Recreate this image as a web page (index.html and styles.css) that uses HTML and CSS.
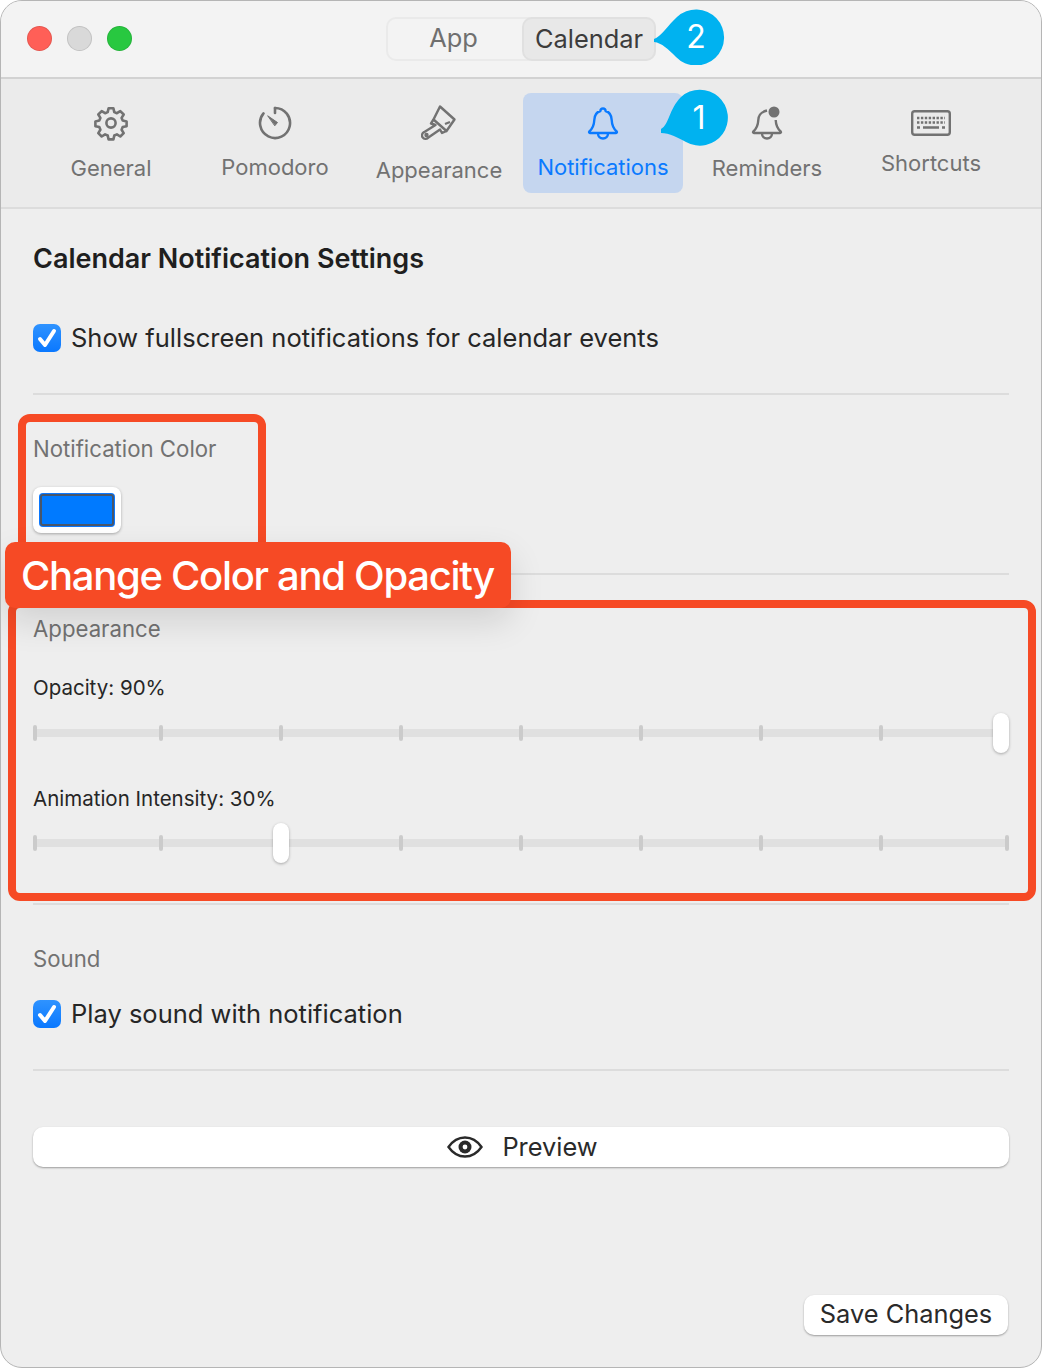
FILE: index.html
```html
<!DOCTYPE html>
<html lang="en">
<head>
    <meta charset="UTF-8">
    <title>Calendar Notification Settings</title>
    <link rel="stylesheet" href="styles.css">
</head>
<body>
    <div class="window">
        <header class="titlebar">
            <div class="lights">
                <span class="light red"></span>
                <span class="light grey"></span>
                <span class="light green"></span>
            </div>
            <div class="segments">
                <span class="segment">App</span>
                <span class="segment active">Calendar</span>
            </div>
        </header>

        <nav class="toolbar">
            <div class="tab">
                <svg class="icon icon-gear" viewBox="0 0 36 36" fill="none" stroke="currentColor" stroke-width="2.6" stroke-linejoin="round">
                    <path d="M15.6 3.2h4.8l.9 3.9 2.6 1.1 3.4-2.1 3.4 3.4-2.1 3.4 1.1 2.6 3.9.9v4.8l-3.9.9-1.1 2.6 2.1 3.4-3.4 3.4-3.4-2.1-2.6 1.1-.9 3.9h-4.8l-.9-3.9-2.6-1.1-3.4 2.1-3.4-3.4 2.1-3.4-1.1-2.6-3.9-.9v-4.8l3.9-.9 1.1-2.6-2.1-3.4 3.4-3.4 3.4 2.1 2.6-1.1z"/>
                    <circle cx="18" cy="18" r="4.6"/>
                </svg>
                <span class="tab-label">General</span>
            </div>
            <div class="tab">
                <svg class="icon icon-clock" viewBox="0 0 34 34" fill="none" stroke="currentColor" stroke-width="2.6" stroke-linecap="round">
                    <path d="M17 2a15 15 0 1 1-11.500 5.400"/>
                    <path d="M17 2v5"/>
                    <path d="M10 10l9.500 6.500-2.500 3z" fill="currentColor" stroke-width="1" stroke-linejoin="round"/>
                </svg>
                <span class="tab-label">Pomodoro</span>
            </div>
            <div class="tab">
                <svg class="icon icon-brush" viewBox="0 0 36 38" fill="none" stroke="currentColor" stroke-width="2.4" stroke-linejoin="round">
                    <path d="M19 2.500l14.500 13-8 11.500-13-11.500z"/>
                    <path d="M12.500 15.500l-2.500 4 4.500 1.500-11.500 7.200a3.500 3.500 0 1 0 4 5.600l12-8.300 2 3.500 4.500-2"/>
                    <path d="M24 20l5-2"/>
                    <circle cx="5.500" cy="31" r="1" fill="currentColor"/>
                </svg>
                <span class="tab-label">Appearance</span>
            </div>
            <div class="tab selected">
                <svg class="icon icon-bell" viewBox="0 0 32 34" fill="none" stroke="currentColor" stroke-width="2.4" stroke-linejoin="round">
                    <path d="M16 2.500c-1.500 0-2.500 1-2.600 2.500C9 6.300 7.500 9.500 7.300 14c-.2 5-1.600 8.500-5 11.500-.5.500-.2 1.500.6 1.500h26.200c.8 0 1.100-1 .6-1.500-3.400-3-4.800-6.500-5-11.500-.2-4.500-1.700-7.700-6.100-9-.1-1.500-1.100-2.500-2.600-2.500z"/>
                    <path d="M11 27.500c0 3 2.200 5 5 5s5-2 5-5"/>
                </svg>
                <span class="tab-label">Notifications</span>
            </div>
            <div class="tab">
                <svg class="icon icon-bell" viewBox="0 0 32 34" fill="none" stroke="currentColor" stroke-width="2.4" stroke-linejoin="round">
                    <path d="M16 4.500C9 6.300 7.500 9.500 7.300 14c-.2 5-1.600 8.500-5 11.500-.5.500-.2 1.500.6 1.500h26.200c.8 0 1.100-1 .6-1.500-3.400-3-4.800-6.500-5-11.500"/>
                    <path d="M11 27.500c0 3 2.200 5 5 5s5-2 5-5"/>
                    <circle cx="23" cy="6" r="5.500" fill="currentColor" stroke="none"/>
                </svg>
                <span class="tab-label">Reminders</span>
            </div>
            <div class="tab">
                <svg class="icon icon-keys" viewBox="0 0 40 26" fill="none" stroke="currentColor" stroke-width="2.4">
                    <rect x="1.200" y="1.200" width="37.600" height="23.600" rx="2.500"/>
                    <path d="M6 8h28M6 12.500h28" stroke-width="2.600" stroke-dasharray="2.400 1.500"/>
                    <path d="M6 17.500h3M12 17.500h16M31 17.500h3" stroke-width="2.400"/>
                </svg>
                <span class="tab-label">Shortcuts</span>
            </div>
        </nav>

        <main class="content">
            <h2 class="title">Calendar Notification Settings</h2>

            <label class="check first-check">
                <span class="box">
                    <svg viewBox="0 0 28 28" fill="none" stroke="#fff" stroke-width="4" stroke-linecap="round" stroke-linejoin="round"><path d="M7 15l5 6 9-14"/></svg>
                </span>
                Show fullscreen notifications for calendar events
            </label>
            <hr class="rule rule-a">

            <section class="color-section">
                <h3 class="section-name">Notification Color</h3>
                <div class="swatch"><span class="swatch-fill"></span></div>
            </section>
            <hr class="rule rule-b">

            <section class="appearance-section">
                <h3 class="section-name">Appearance</h3>
                <div class="slider-name opacity-name">Opacity: 90%</div>
                <div class="slider">
                    <i></i><i></i><i></i><i></i><i></i><i></i><i></i><i></i>
                    <span class="thumb" style="left: 960px"></span>
                </div>
                <div class="slider-name intensity-name">Animation Intensity: 30%</div>
                <div class="slider">
                    <i></i><i></i><i></i><i></i><i></i><i></i><i></i><i></i><i></i>
                    <span class="thumb" style="left: 240px"></span>
                </div>
            </section>
            <hr class="rule rule-c">

            <h3 class="section-name sound-name">Sound</h3>
            <label class="check sound-check">
                <span class="box">
                    <svg viewBox="0 0 28 28" fill="none" stroke="#fff" stroke-width="4" stroke-linecap="round" stroke-linejoin="round"><path d="M7 15l5 6 9-14"/></svg>
                </span>
                Play sound with notification
            </label>
            <hr class="rule rule-d">

            <button class="button preview">
                <svg class="eye" viewBox="0 0 36 22" fill="none" stroke="currentColor" stroke-width="2.400">
                    <path d="M1.500 11C6 4.500 11.500 1.500 18 1.500S30 4.500 34.500 11C30 17.500 24.500 20.500 18 20.500S6 17.500 1.500 11z"/>
                    <circle cx="18" cy="11" r="6.500" fill="currentColor" stroke="none"/>
                    <circle cx="18" cy="11" r="2.400" fill="#fff" stroke="none"/>
                </svg>
                Preview
            </button>

            <div class="footer">
                <button class="button save">Save Changes</button>
            </div>
        </main>

        <!-- annotations on top of the screenshot -->
        <div class="mark mark-color"></div>
        <div class="mark mark-appearance"></div>
        <div class="callout">Change Color and Opacity</div>

        <div class="bubble bubble-two">
            <svg viewBox="0 0 72 58" fill="#00b2f0"><path d="M1 32C8 30 15 18 24 10A28 28 0 1 1 23 50C15 42 9 36 1 35Z"/></svg>
            <span class="bubble-num">2</span>
        </div>
        <div class="bubble bubble-one">
            <svg viewBox="0 0 70 58" fill="#00b2f0"><path d="M1 40C9 36 9 20 21 8A28 28 0 1 1 26 53C19 49 9 44 1 44Z"/></svg>
            <span class="bubble-num">1</span>
        </div>
    </div>
</body>
</html>
```

FILE: styles.css
```css
* {
    box-sizing: border-box;
}
body {
    margin: 0;
    background: #fff;
    font-family: Inter, 'Noto Sans', sans-serif;
    color: #262626;
}
.window {
    position: relative;
    width: 1042px;
    height: 1368px;
    background: #eeeeee;
    border: 1px solid #b5b5b5;
    border-radius: 22px;
    overflow: hidden;
    display: flex;
    flex-direction: column;
}

/* title bar */
.titlebar {
    position: relative;
    height: 78px;
    flex: none;
    background: #f3f3f3;
    border-bottom: 2px solid #d2d2d2;
    display: flex;
    align-items: center;
    justify-content: center;
}
.lights {
    position: absolute;
    left: 26px;
    top: 25px;
    display: flex;
    gap: 15px;
}
.light {
    width: 25px;
    height: 25px;
    border-radius: 50%;
    border: 1px solid rgba(0, 0, 0, 0.1);
}
.red { background: #ff5f57; }
.grey { background: #d9d9d9; }
.green { background: #28c840; }
.segments {
    display: flex;
    width: 270px;
    height: 44px;
    border: 2px solid #eaeaea;
    border-radius: 10px;
}
.segment {
    flex: 1;
    padding-right: 3px;
    text-align: center;
    font-size: 25.4px;
    line-height: 38px;
    color: #6f6f6f;
}
.segment.active {
    flex: none;
    width: 134px;
    margin: -2px -2px -2px 0;
    padding-right: 0;
    line-height: 40px;
    color: #3c3c3c;
    background: #e8e8e8;
    border: 2px solid #e0e0e0;
    border-radius: 10px;
}

/* preference tabs */
.toolbar {
    height: 130px;
    flex: none;
    display: flex;
    gap: 4px;
    padding: 14px 0 0 30px;
    background: #ebebeb;
    border-bottom: 2px solid #dcdcdc;
}
.tab {
    width: 160px;
    height: 100px;
    border-radius: 8px;
    display: flex;
    flex-direction: column;
    align-items: center;
    color: #727272;
}
.tab-label {
    font-size: 22px;
    line-height: 28px;
    margin-top: 13px;
}
.tab.selected {
    background: #c5d6ef;
    color: #0a7aff;
}
.icon {
    display: block;
}
.icon-gear { width: 36px; height: 36px; margin-top: 12px; }
.icon-clock { width: 34px; height: 34px; margin-top: 13px; }
.icon-brush { width: 36px; height: 38px; margin-top: 11px; }
.icon-bell { width: 32px; height: 34px; margin-top: 13px; }
.icon-keys { width: 40px; height: 26px; margin-top: 17px; }
.tab:nth-child(3) .tab-label { margin-top: 14px; }
.tab:nth-child(5) .tab-label { margin-top: 14px; }

/* settings */
.content {
    flex: 1;
    padding: 0 32px;
    display: flex;
    flex-direction: column;
}
.title {
    margin: 32px 0 0;
    font-size: 27px;
    line-height: 36px;
    font-weight: 600;
    color: #1f1f1f;
}
.check {
    display: flex;
    align-items: center;
    gap: 10px;
    font-size: 25.5px;
    line-height: 32px;
    color: #262626;
}
.first-check { margin-top: 45px; }
.box {
    width: 28px;
    height: 28px;
    border-radius: 7px;
    background: linear-gradient(#2f93ff, #0a78ff);
    display: block;
}
.box svg {
    display: block;
}
.rule {
    width: 100%;
    height: 2px;
    margin: 0;
    border: none;
    background: #dcdcdc;
}
.rule-a { margin-top: 39px; }
.rule-b { margin-top: 40px; }
.rule-c { margin-top: 52px; }
.rule-d { margin-top: 39px; }
.section-name {
    margin: 0;
    font-size: 22.2px;
    line-height: 28px;
    font-weight: 400;
    color: #727272;
}
.color-section { padding-top: 40px; }
.swatch {
    width: 88px;
    height: 46px;
    margin-top: 24px;
    padding: 7px;
    background: #fff;
    border-radius: 8px;
    box-shadow: 0 1px 3px rgba(0, 0, 0, 0.3);
}
.swatch-fill {
    display: block;
    height: 100%;
    background: #007aff;
    border: 2px solid #47566b;
    border-radius: 3px;
    box-shadow: 0 0 0 1px #0a78ff;
}
.appearance-section { padding-top: 40px; }
.slider-name {
    font-size: 20.5px;
    line-height: 26px;
    color: #262626;
}
.opacity-name { margin-top: 32px; }
.intensity-name { margin-top: 45px; }
.slider {
    position: relative;
    height: 16px;
    margin-top: 23px;
    display: grid;
    grid-template-columns: 126px repeat(6, 120px) 124px 1fr;
}
.opacity-name + .slider { margin-top: 24px; }
.slider::before {
    content: "";
    position: absolute;
    left: 0;
    right: 0;
    top: 4px;
    height: 8px;
    background: #e0e0e0;
}
.slider i {
    position: relative;
    width: 4px;
    height: 16px;
    background: #cbcbcb;
    border-radius: 2px;
}
.slider i:last-of-type:nth-of-type(9) {
    justify-self: end;
}
.thumb {
    position: absolute;
    top: -12px;
    width: 16px;
    height: 40px;
    background: #fff;
    border-radius: 8px;
    box-shadow: 0 1px 3px rgba(0, 0, 0, 0.3);
}
.sound-name { margin-top: 40px; }
.sound-check { margin-top: 25px; }

.button {
    display: flex;
    align-items: center;
    justify-content: center;
    height: 40px;
    padding: 0;
    background: #fff;
    border: none;
    border-radius: 10px;
    box-shadow: 0 1px 2px rgba(0, 0, 0, 0.35);
    font-family: inherit;
    font-size: 25.4px;
    color: #2a2a2a;
}
.preview {
    width: 100%;
    margin-top: 56px;
    padding: 0 0 1px 3px;
    gap: 19px;
}
.eye {
    width: 36px;
    height: 22px;
}
.footer {
    margin-top: auto;
    padding: 0 1px 32px 0;
    display: flex;
    justify-content: flex-end;
}
.save {
    width: 204px;
    padding-bottom: 4px;
}

/* red annotation frames and label */
.mark {
    position: absolute;
    border: 8px solid #f64a25;
    border-radius: 12px;
}
.mark-color {
    left: 17px;
    top: 413px;
    width: 248px;
    height: 150px;
}
.mark-appearance {
    left: 7px;
    top: 599px;
    width: 1028px;
    height: 301px;
}
.callout {
    position: absolute;
    left: 4px;
    top: 541px;
    width: 506px;
    height: 66px;
    padding-left: 16px;
    background: #f64a25;
    border-radius: 10px;
    box-shadow: 0 14px 34px rgba(0, 0, 0, 0.12);
    color: #fff;
    font-size: 40px;
    font-weight: 500;
    letter-spacing: -1.3px;
    line-height: 68px;
    white-space: nowrap;
}
.bubble {
    position: absolute;
    color: #fff;
}
.bubble svg {
    display: block;
    width: 100%;
    height: 100%;
}
.bubble-two {
    left: 652px;
    top: 6px;
    width: 72px;
    height: 58px;
}
.bubble-one {
    left: 659px;
    top: 88px;
    width: 70px;
    height: 58px;
}
.bubble-num {
    position: absolute;
    top: 0;
    right: 1px;
    width: 56px;
    text-align: center;
    font-size: 32px;
    line-height: 60px;
}
.bubble-one .bubble-num {
    right: 3px;
    line-height: 58px;
}
```
